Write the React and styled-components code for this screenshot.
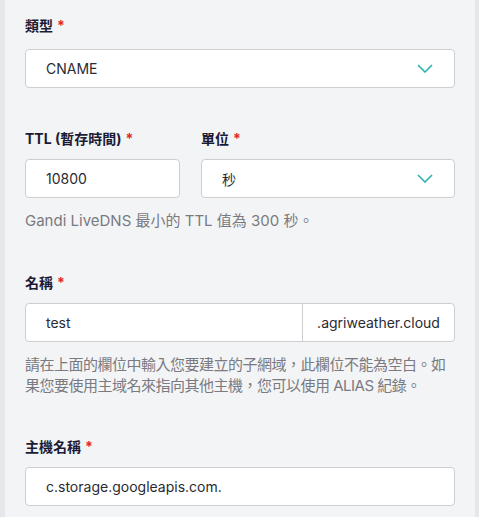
import React from "react";
import styled, { createGlobalStyle } from "styled-components";

const Global = createGlobalStyle`
  html, body { margin: 0; padding: 0; background: #e6e7ea; }
  body { font-family: Inter, "Noto Sans CJK TC", sans-serif; }
  * { box-sizing: border-box; }
`;

const Panel = styled.div`
  margin-left: 5px;
  width: 470px;
  min-height: 517px;
  background: #f3f4f6;
  padding: 16px 20px 0 20px;
  display: flex;
  flex-direction: column;
  gap: 41px;
`;

const Field = styled.div`
  display: flex;
  flex-direction: column;
  margin-top: ${(p) => p.$mt ?? 0}px;
`;

const Row = styled.div`
  display: grid;
  grid-template-columns: 155px 1fr;
  gap: 21px;
`;

const Label = styled.label`
  font-size: 14px;
  line-height: 20px;
  font-weight: 700;
  color: #1c1b35;
  margin-bottom: ${(p) => p.$mb ?? 10}px;
  display: block;
`;

const Req = styled.span`
  color: #e3262d;
  margin-left: 4px;
`;

const Box = styled.div`
  height: 39px;
  background: #fff;
  border: 1px solid #cdced2;
  border-radius: 4px;
  display: flex;
  align-items: center;
  font-size: 14px;
  color: #2a2a33;
  overflow: hidden;
`;

const Value = styled.span`
  flex: 1;
  padding-left: 20px;
`;

const Chevron = styled.svg`
  width: 16px;
  height: 9px;
  margin-right: 21px;
  flex: none;
`;

const Suffix = styled.span`
  flex: none;
  width: 152px;
  height: 100%;
  display: flex;
  align-items: center;
  justify-content: center;
  border-left: 1px solid #cdced2;
  color: #2a2a33;
`;

const Help = styled.p`
  margin: ${(p) => p.$mt ?? 12}px 0 0 0;
  font-size: 15px;
  line-height: 21px;
  color: #7a7a80;
  letter-spacing: ${(p) => p.$ls ?? 0}px;
`;

const Down = () => (
  <Chevron viewBox="0 0 16 9">
    <path d="M1 1 L8 8 L15 1" fill="none" stroke="#2ab3ad" strokeWidth="1.6" />
  </Chevron>
);

const Select = ({ value }) => (
  <Box>
    <Value>{value}</Value>
    <Down />
  </Box>
);

export default function App() {
  return (
    <>
      <Global />
      <Panel>
        <Field>
          <Label $mb={13}>
            類型<Req>*</Req>
          </Label>
          <Select value="CNAME" />
        </Field>

        <Field>
          <Row>
            <Field>
              <Label>
                TTL (暫存時間)<Req>*</Req>
              </Label>
              <Box>
                <Value>10800</Value>
              </Box>
            </Field>
            <Field>
              <Label>
                單位<Req>*</Req>
              </Label>
              <Select value="秒" />
            </Field>
          </Row>
          <Help $mt={12}>Gandi LiveDNS 最小的 TTL 值為 300 秒。</Help>
        </Field>

        <Field $mt={1}>
          <Label>
            名稱<Req>*</Req>
          </Label>
          <Box>
            <Value>test</Value>
            <Suffix>.agriweather.cloud</Suffix>
          </Box>
          <Help $ls={-0.5}>
            請在上面的欄位中輸入您要建立的子網域，此欄位不能為空白。如果您要使用主域名來指向其他主機，您可以使用 ALIAS 紀錄。
          </Help>
        </Field>

        <Field>
          <Label>
            主機名稱<Req>*</Req>
          </Label>
          <Box>
            <Value>c.storage.googleapis.com.</Value>
          </Box>
        </Field>
      </Panel>
    </>
  );
}
